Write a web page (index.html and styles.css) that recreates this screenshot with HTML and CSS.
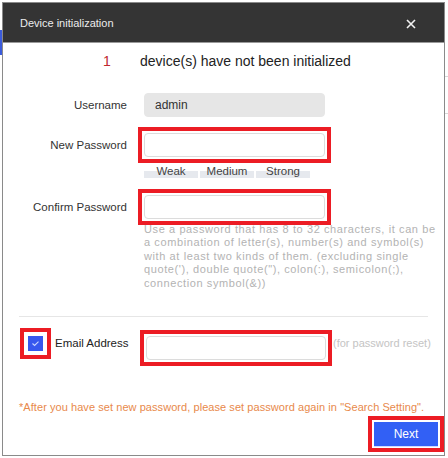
FILE: index.html
```html
<!DOCTYPE html>
<html lang="en">
<head>
<meta charset="utf-8">
<title>Device initialization</title>
<link rel="stylesheet" href="styles.css">
</head>
<body>
<div class="app-bg">
  <div class="bg-strip"></div>
  <div class="bg-line bg-line-1"></div>
  <div class="bg-line bg-line-2"></div>
</div>
<div class="dialog">
  <div class="dlg-header">
    <span class="dlg-title">Device initialization</span>
    <svg class="dlg-close" width="10" height="10" viewBox="0 0 10 10"><path d="M1 1L9 9M9 1L1 9" stroke="#f2f2f2" stroke-width="1.6" fill="none"/></svg>
  </div>
  <div class="dlg-body">
    <div class="msg"><span class="msg-num">1</span><span class="msg-text">device(s) have not been initialized</span></div>
    <div class="form">
      <label class="f-label">Username</label>
      <div class="f-input f-readonly">admin</div>

      <label class="f-label row-pw">New Password</label>
      <div class="hl row-pw"><div class="f-input"></div></div>

      <div class="strength">
        <span class="seg">Weak</span><span class="seg">Medium</span><span class="seg">Strong</span>
      </div>

      <label class="f-label row-cf">Confirm Password</label>
      <div class="hl row-cf"><div class="f-input"></div></div>

      <p class="hint">Use a password that has 8 to 32 characters, it can be<br>a combination of letter(s), number(s) and symbol(s)<br>with at least two kinds of them. (excluding single<br>quote('), double quote("), colon(:), semicolon(;),<br>connection symbol(&amp;))</p>
    </div>
    <div class="sep"></div>
    <div class="email-row">
      <span class="chk hl-chk"><svg width="15" height="15" viewBox="0 0 15 15"><path d="M4.5 7.5L6.6 9.5L10.5 5.6" stroke="#c9d4ff" stroke-width="1.1" fill="none"/></svg></span>
      <label class="email-label">Email Address</label>
      <div class="hl email-input"><div class="f-input"></div></div>
      <span class="email-note">(for password reset)</span>
    </div>
    <p class="warn">*After you have set new password, please set password again in "Search Setting".</p>
    <div class="actions"><button class="btn-next">Next</button></div>
  </div>
</div>
</body>
</html>
```
FILE: styles.css
```css
html, body {
  margin: 0;
  padding: 0;
  background: #ffffff;
  width: 448px;
  height: 458px;
  overflow: hidden;
  font-family: "Liberation Sans", Arial, sans-serif;
}

.app-bg {
  position: absolute;
  inset: 0;
}
.bg-strip {
  position: absolute;
  left: 0;
  top: 30px;
  width: 2px;
  height: 25px;
  background: #3b5bdb;
}
.bg-line {
  position: absolute;
  right: 0;
  width: 4px;
  height: 1px;
  background: #d8d8d8;
}
.bg-line-1 { top: 76px; }
.bg-line-2 { top: 113px; }

.dialog {
  position: absolute;
  left: 2px;
  top: 2px;
  width: 441px;
  height: 452px;
  border: 1px solid #8a8a8a;
  background: #ffffff;
  display: flex;
  flex-direction: column;
}

.dlg-header {
  height: 40px;
  background: #343434;
  border-bottom: 1px solid #9a9a9a;
  display: flex;
  align-items: center;
  justify-content: space-between;
  padding: 0 28px 0 17px;
  box-sizing: border-box;
  flex: none;
}
.dlg-title {
  color: #ececec;
  font-size: 11px;
}
.dlg-close {
  display: block;
  margin-top: 2px;
}

.dlg-body {
  flex: 1;
  display: flex;
  flex-direction: column;
}

.msg {
  display: flex;
  align-items: center;
  height: 20px;
  margin-top: 8px;
  padding-left: 100px;
  font-size: 14px;
}
.msg-num {
  color: #c0282d;
  width: 37px;
}
.msg-text {
  color: #222;
}

.form {
  display: grid;
  grid-template-columns: 124px 181px;
  column-gap: 17px;
  align-items: center;
  margin-top: 22px;
}
.f-label {
  text-align: right;
  font-size: 11.5px;
  color: #333;
}
.f-input {
  height: 24px;
  box-sizing: border-box;
  border: 1px solid #dcdcdc;
  border-radius: 4px;
  background: #fff;
}
.f-readonly {
  background: #e6e6e6;
  border-color: #e6e6e6;
  font-size: 12px;
  color: #333;
  line-height: 22px;
  padding-left: 10px;
}
.hl {
  outline: 4px solid #ec1c24;
  outline-offset: 2px;
}
.row-pw { margin-top: 16px; }
.row-cf { margin-top: 16px; }

.strength {
  grid-column: 2;
  display: flex;
  gap: 2px;
  margin-top: 8px;
  width: 168px;
}
.seg {
  width: 54px;
  height: 14px;
  line-height: 12px;
  text-align: center;
  font-size: 11.5px;
  color: #444;
  background: linear-gradient(to bottom, transparent 6px, #e6e9ee 6px, #e6e9ee 13px, transparent 13px);
}

.hint {
  grid-column: 2;
  width: 300px;
  margin: 4px 0 0 0;
  font-size: 11px;
  line-height: 13.4px;
  color: #b3b3b3;
  letter-spacing: 0.6px;
  white-space: nowrap;
}

.sep {
  height: 1px;
  background: #e6e6e6;
  margin: 26px 16px 0 16px;
}

.email-row {
  display: flex;
  align-items: flex-start;
  margin-top: 19px;
  padding-left: 25px;
}
.chk {
  width: 15px;
  height: 15px;
  background: #3757ee;
  border-radius: 2px;
  flex: none;
}
.chk svg { display: block; }
.hl-chk {
  outline: 4px solid #ec1c24;
  outline-offset: 4px;
  border-radius: 0;
}
.email-label {
  margin-left: 12px;
  width: 72px;
  font-size: 11.5px;
  color: #222;
  line-height: 15px;
  white-space: nowrap;
}
.email-input {
  margin-left: 19px;
  width: 180px;
  flex: none;
}
.email-note {
  margin-left: 7px;
  font-size: 11px;
  color: #c4c4c4;
  line-height: 15px;
  white-space: nowrap;
}

.warn {
  margin: 40px 0 0 16px;
  font-size: 11px;
  line-height: 14px;
  color: #e8894b;
  letter-spacing: 0.06px;
  white-space: nowrap;
}

.actions {
  display: flex;
  justify-content: flex-end;
  margin-top: 8px;
  padding-right: 6px;
}
.btn-next {
  width: 64px;
  height: 24px;
  border: none;
  background: #3260f5;
  color: #fff;
  font-family: "Liberation Sans", Arial, sans-serif;
  font-size: 12px;
  padding: 0;
  outline: 4px solid #ec1c24;
  outline-offset: 2px;
  box-shadow: 0 1px 0 #d0d8ff;
}
```
